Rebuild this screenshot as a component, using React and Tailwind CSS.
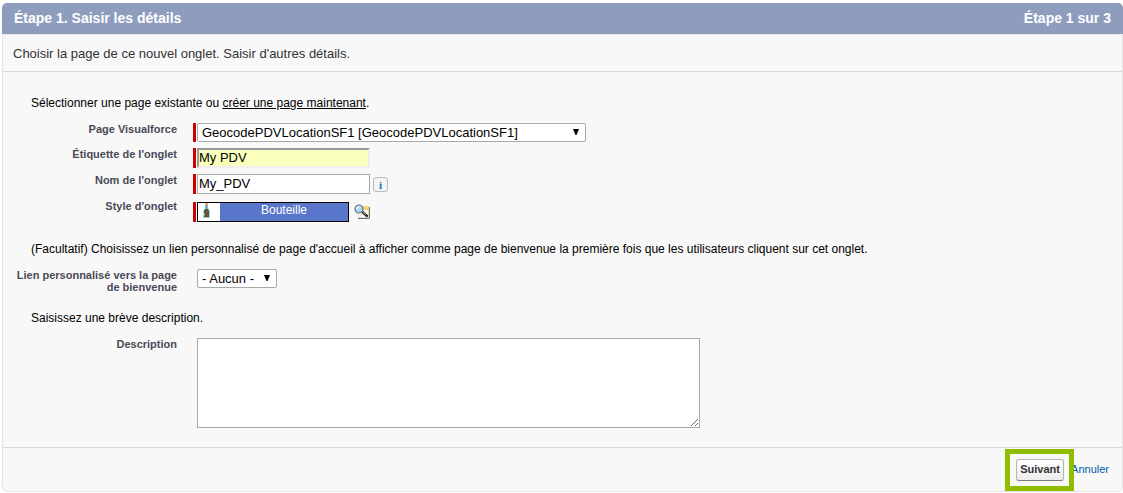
import React from "react";

function Row({ label, htmlFor, required, children }) {
  return (
    <div className="flex items-start">
      <label
        htmlFor={htmlFor}
        className="w-[174px] shrink-0 pl-3 text-right text-[11px] font-bold leading-3 text-[#4a4a56]"
      >
        {label}
      </label>
      <div className={"ml-4 flex items-stretch border-l-[3px] pl-px " + (required ? "border-[#c00]" : "border-transparent")}>
        {children}
      </div>
    </div>
  );
}

function Select({ id, value, className }) {
  return (
    <div className={"relative h-[19px] " + className}>
      <select
        id={id}
        className="block h-full w-full appearance-none rounded-[2px] border border-[#a9a9a9] bg-white pl-1 text-[13px] leading-4 text-black"
      >
        <option>{value}</option>
      </select>
      <svg viewBox="0 0 6 6" className="pointer-events-none absolute right-[7px] top-[6px] h-[6px] w-[6px]" aria-hidden="true">
        <path d="M0 0H6L3.500 6H2.500Z" fill="#000" />
      </svg>
    </div>
  );
}

function BottleIcon() {
  return (
    <svg viewBox="0 0 22 18" className="h-[18px] w-[22px] shrink-0 bg-white" aria-hidden="true">
      <path d="M7 1h3v4l2 3v7H5V8l2-3Z" fill="#a9dbe2" />
      <path d="M7 0h3v2H7Z" fill="#eda06c" />
      <path d="M7.500 2h2v4h-2Z" fill="#5f9fa5" />
      <path d="M7 6h3l1 2v6H6V8Z" fill="#5a5236" />
      <path d="M6 10h1v3H6Z" fill="#8fa89a" />
      <path d="M8 8h1v2H8ZM9 11h1v2H9Z" fill="#8b5a34" />
      <path d="M5 14h7v1H5Z" fill="#a7c9c4" />
    </svg>
  );
}

function LookupIcon() {
  return (
    <svg viewBox="0 0 17 16" className="h-4 w-[17px]" aria-hidden="true">
      <path d="M4.500 2.500h10v11h-10Z" fill="#fbfaf6" stroke="#dcd9d0" />
      <path d="M8 2h7v4H8Z" fill="#ffcf70" />
      <path d="M15.500 3v11.500H4" fill="none" stroke="#77736d" />
      <path d="M8.500 8l4.500 4" stroke="#2b2b2b" strokeWidth="2.500" strokeLinecap="round" />
      <path d="M9 8l3 2.700" stroke="#d9a86c" strokeWidth="1" />
      <circle cx="5" cy="5" r="4" fill="#a9d7f3" stroke="#5c7488" strokeWidth="1.200" />
      <path d="M2.800 5.500a2.500 2.500 0 0 1 2.500-2.500" fill="none" stroke="#f2fbff" strokeWidth="1.300" />
    </svg>
  );
}

export default function App() {
  return (
    <div className="min-h-screen bg-white pl-0.5 pt-[3px] font-['Liberation_Sans',Arial,sans-serif] text-black">
      <form onSubmit={(e) => e.preventDefault()}>
        <header className="flex h-[31px] items-center justify-between rounded-t-[5px] bg-[#8e9dbe] px-3 pb-px text-[14px] font-bold leading-4 text-white">
          <h1>Étape 1. Saisir les détails</h1>
          <span>Étape 1 sur 3</span>
        </header>

        <div className="rounded-b-[5px] border border-[#e6e6e6] bg-[#f8f8f8]">
          <h2 className="border-b border-[#d9d9d9] px-[10px] pb-[9px] pt-[11px] text-[13px] leading-4 text-[#333]">
            Choisir la page de ce nouvel onglet. Saisir d'autres détails.
          </h2>

          <div className="border-b border-[#d9d9d9] pb-[19px] pt-[23px] text-[12px] leading-4">
            <p className="px-7">
              Sélectionner une page existante ou{" "}
              <a href="#nouvelle-page" className="underline">créer une page maintenant</a>.
            </p>

            <div className="mt-3 flex flex-col gap-[6px]">
              <Row label="Page Visualforce" htmlFor="page" required>
                <Select id="page" value="GeocodePDVLocationSF1 [GeocodePDVLocationSF1]" className="w-[389px]" />
              </Row>
              <Row label="Étiquette de l'onglet" htmlFor="etiquette" required>
                <input
                  id="etiquette"
                  type="text"
                  defaultValue="My PDV"
                  className="h-5 w-[173px] border-2 border-b-[#eee] border-l-[#999] border-r-[#eee] border-t-[#999] bg-[#faffbd] pb-0.5 text-[13px] leading-4"
                />
              </Row>
              <Row label="Nom de l'onglet" htmlFor="nom" required>
                <input
                  id="nom"
                  type="text"
                  defaultValue="My_PDV"
                  className="h-5 w-[173px] border border-[#a9a9a9] bg-white pb-0.5 pl-px text-[13px] leading-4"
                />
                <button
                  type="button"
                  aria-label="Informations"
                  className="ml-[3px] mt-[3px] flex h-[15px] w-[15px] items-center justify-center self-start rounded-[3px] border border-[#bbb] bg-[#f4f4f4] font-['Liberation_Serif',serif] text-[11px] font-bold leading-3 text-[#0070d2]"
                >
                  i
                </button>
              </Row>
              <div className="flex items-start">
                <label htmlFor="style" className="w-[174px] shrink-0 text-right text-[11px] font-bold leading-3 text-[#4a4a56]">
                  Style d'onglet
                </label>
                <div className="ml-4 mt-0.5 flex border-l-[3px] border-[#c00] pl-px">
                  <div className="flex h-5 w-[152px] border border-black bg-[#5a76cb]">
                    <BottleIcon />
                    <input
                      id="style"
                      type="text"
                      readOnly
                      defaultValue="Bouteille"
                      className="h-[15px] min-w-0 flex-1 bg-transparent text-center text-[12px] leading-[15px] text-white"
                    />
                  </div>
                </div>
                <button type="button" aria-label="Rechercher un style" className="ml-[5px] mt-1">
                  <LookupIcon />
                </button>
              </div>
            </div>

            <p className="mt-[19px] px-7">
              (Facultatif) Choisissez un lien personnalisé de page d'accueil à afficher comme page de bienvenue la première fois que les utilisateurs cliquent sur cet onglet.
            </p>

            <div className="mt-3">
              <Row label="Lien personnalisé vers la page de bienvenue" htmlFor="lien">
                <Select id="lien" value="- Aucun -" className="w-20" />
              </Row>
            </div>

            <p className="mt-[17px] px-7">Saisissez une brève description.</p>

            <div className="mt-3">
              <Row label="Description" htmlFor="description">
                <textarea id="description" className="block h-[90px] w-[503px] resize border border-[#a9a9a9] bg-white p-0.5 text-[13px]" />
              </Row>
            </div>
          </div>

          <footer className="flex h-[43px] items-center justify-end pr-[13px] text-[11px] leading-[13px]">
            <div className="relative">
              <button
                type="submit"
                className="block h-[22px] w-12 rounded-[3px] border border-[#b5b5b5] border-b-[#7f7f7f] bg-linear-to-b from-white to-[#ececec] text-[11px] font-bold leading-[13px] text-[#333]"
              >
                Suivant
              </button>
              <span className="pointer-events-none absolute -inset-y-[10px] -left-[11px] -right-[10px] border-5 border-[#8fbe00]" />
            </div>
            <a href="#annuler" className="ml-[7px] text-[#015ba7]">Annuler</a>
          </footer>
        </div>
      </form>
    </div>
  );
}
